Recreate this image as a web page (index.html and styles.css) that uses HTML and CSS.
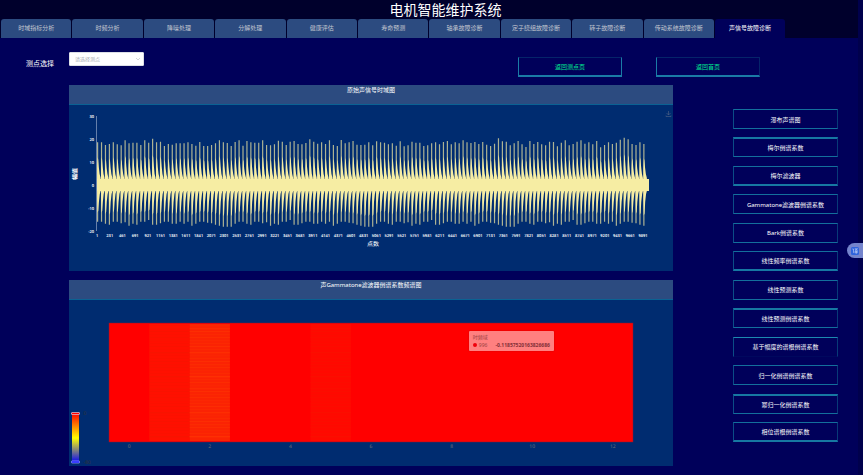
FILE: index.html
```
<!DOCTYPE html>
<html lang="zh-CN">
<head>
    <meta charset="UTF-8">
    <meta name="viewport" content="width=device-width, initial-scale=1.0">
    <title>电机智能维护系统</title>
    <link rel="stylesheet" href="styles.css">
</head>
<body>
    <header class="header">
        <h1>电机智能维护系统</h1>
        <nav class="tabs">
            <a href="#">时域指标分析</a>
            <a href="#">时频分析</a>
            <a href="#">降噪处理</a>
            <a href="#">分解处理</a>
            <a href="#">健康评估</a>
            <a href="#">寿命预测</a>
            <a href="#">轴承故障诊断</a>
            <a href="#">定子绕组故障诊断</a>
            <a href="#">转子故障诊断</a>
            <a href="#">传动系统故障诊断</a>
            <a href="#" class="active">声信号故障诊断</a>
        </nav>
    </header>

    <div class="toolbar">
        <label for="point">测点选择</label>
        <div class="select-box">
            <select id="point">
                <option>请选择测点</option>
            </select>
            <svg class="arrow" viewBox="0 0 6 4"><path d="M1 1l2 2 2-2" fill="none" stroke="#c0c4cc" stroke-width="0.7"/></svg>
        </div>
        <div class="back">
            <button type="button">返回测点页</button>
            <button type="button">返回首页</button>
        </div>
    </div>

    <main class="main">
        <div class="charts">
            <section class="panel">
                <h2>原始声信号时域图</h2>
                <svg id="wave" class="chart" viewBox="0 0 604 166"></svg>
            </section>
            <section class="panel">
                <h2>声Gammatone滤波器倒谱系数频谱图</h2>
                <svg id="heat" class="chart" viewBox="0 0 604 166">
                    <defs>
                        <linearGradient id="ramp" x1="0" y1="0" x2="0" y2="1">
                            <stop offset="0" stop-color="#ff0000"/>
                            <stop offset="0.5" stop-color="#ffff00"/>
                            <stop offset="1" stop-color="#0000ff"/>
                        </linearGradient>
                    </defs>
                </svg>
                <div class="tooltip">
                    <div>时频域</div>
                    <div class="tooltip-row"><i class="dot"></i><span>996</span><b>-0.11857520163826686</b></div>
                </div>
            </section>
        </div>

        <div class="methods">
            <button type="button">瀑布声谱图</button>
            <button type="button" class="top">梅尔倒谱系数</button>
            <button type="button" class="bottom">梅尔滤波器</button>
            <button type="button">Gammatone滤波器倒谱系数</button>
            <button type="button">Bark倒谱系数</button>
            <button type="button" class="bottom">线性频率倒谱系数</button>
            <button type="button">线性预测系数</button>
            <button type="button" class="top">线性预测倒谱系数</button>
            <button type="button" class="open">基于幅度的谱根倒谱系数</button>
            <button type="button">归一化倒谱倒谱系数</button>
            <button type="button" class="top">幂归一化倒谱系数</button>
            <button type="button" class="bottom">相位谱根倒谱系数</button>
        </div>
    </main>

    <button type="button" class="float-btn" aria-label="翻译">
        <svg viewBox="0 0 8 8">
            <rect x="0" y="0" width="8" height="8" rx="1.5" fill="#2f63dc"/>
            <path d="M1.3 2h1.2v3.6l.8-.6M3.7 1.8h2.8L4 3.8M4.3 2.3l2.4 1.5M3.8 4.5h2.9M3.6 5.6h3.2M5.2 3.7v3.2" fill="none" stroke="#c6d3f8" stroke-width="0.6"/>
        </svg>
    </button>

    <script src="charts.js"></script>
</body>
</html>
```

FILE: styles.css
```
* {
    box-sizing: border-box;
}
body {
    margin: 0;
    min-height: 100vh;
    background-color: #00005a;
    border-right: 5px solid #00004c;
    color: #fff;
    font-family: "Noto Sans", "Noto Sans CJK SC", sans-serif;
    font-size: 6px;
}
button, select {
    font-family: inherit;
    font-size: inherit;
}
.header {
    background-color: #00002c;
    margin-right: -5px;
}
h1 {
    margin: 0;
    padding-left: 28px;
    font-size: 14px;
    font-weight: 400;
    line-height: 19px;
    text-align: center;
}
.tabs {
    display: grid;
    grid-template-columns: repeat(11, 1fr);
    gap: 1px;
    width: 91%;
    padding-left: 1px;
}
.tabs a {
    height: 19px;
    line-height: 19px;
    border-radius: 3px 3px 0 0;
    background-color: #2c4b80;
    color: #c3c7d0;
    text-align: center;
    text-decoration: none;
    white-space: nowrap;
}
.tabs a.active {
    background-color: #00005a;
    color: #fff;
}

/* toolbar */
.toolbar {
    display: flex;
    align-items: flex-start;
    height: 47px;
    padding: 14px 98px 0 26px;
}
.toolbar label {
    width: 43px;
    padding-top: 7px;
    font-size: 7px;
    line-height: 9px;
}
.select-box {
    position: relative;
    width: 75px;
}
.select-box select {
    display: block;
    width: 100%;
    height: 14px;
    padding: 0 5px;
    border: 1px solid #dcdfe6;
    border-radius: 1px;
    background-color: #fff;
    color: #a8acb4;
    font-size: 5px;
    appearance: none;
}
.arrow {
    position: absolute;
    top: 5px;
    right: 3px;
    width: 6px;
    height: 4px;
}
.back {
    display: flex;
    gap: 34px;
    margin-left: auto;
    padding-top: 5px;
}
.back button {
    width: 104px;
    height: 20px;
    padding: 0;
    border: 1px solid #1a7ba6;
    border-top-color: #05246a;
    border-bottom-width: 2px;
    background-color: transparent;
    color: #00e890;
}
.back button:last-child {
    border-right-color: #05246a;
}

.main {
    display: grid;
    grid-template-columns: 1fr 105px;
    gap: 60px;
    padding: 0 20px 9px 69px;
}
.charts {
    display: grid;
    gap: 9px;
}
.panel {
    position: relative;
    background-color: #002c70;
}
h2 {
    height: 20px;
    margin: 0;
    padding-top: 1px;
    border-bottom: 1px solid #0b6293;
    background-color: #2c4b80;
    font-size: 6px;
    font-weight: 400;
    line-height: 8px;
    text-align: center;
}
.chart {
    display: block;
    width: 100%;
    text-rendering: geometricPrecision;
}
.tick {
    fill: #fff;
    font-size: 4px;
    font-weight: 600;
    text-anchor: middle;
}
.tick.end {
    text-anchor: end;
}
.tick.dim {
    fill: #6e7079;
    font-size: 5px;
    font-weight: 400;
}
.tick.dark {
    fill: #333;
    font-size: 5px;
    font-weight: 400;
}
.axis-name {
    fill: #fff;
    font-size: 6px;
    text-anchor: middle;
}
.axis-name.bold {
    font-weight: 700;
}
.tooltip {
    position: absolute;
    top: 51px;
    left: 66.2%;
    padding: 2px 4px;
    border-radius: 1px;
    background-color: rgba(255, 255, 255, 0.5);
    box-shadow: 0 0 2px rgba(0, 0, 0, 0.2);
    color: #a04040;
    font-size: 5px;
    line-height: 8px;
}
.tooltip-row {
    display: flex;
    align-items: center;
}
.tooltip-row b {
    margin-left: 8px;
    color: #842f38;
}
.dot {
    width: 4px;
    height: 4px;
    margin-right: 2px;
    border-radius: 50%;
    background-color: #f0000c;
}

/* right column */
.methods {
    display: flex;
    flex-direction: column;
    justify-content: space-between;
    padding: 24px 0;
}
.methods button {
    height: 20px;
    padding: 0;
    border: 1px solid #136f9c;
    border-left-color: #0b4d86;
    border-right-color: #083a78;
    background-color: transparent;
    color: #fff;
    white-space: nowrap;
}
.methods .top {
    border-top: 2px solid #1678a2;
}
.methods .bottom {
    border-bottom: 2px solid #1678a2;
}
.methods .open {
    border-top-color: #1c8ab0;
    border-bottom-color: #00085e;
}

.float-btn {
    position: fixed;
    top: 243px;
    right: 0;
    width: 16px;
    height: 15px;
    padding: 0 0 0 4px;
    border: 0;
    border-radius: 8px 0 0 8px;
    background-color: #7484cc;
}
.float-btn svg {
    display: block;
    width: 8px;
    height: 8px;
}
```

FILE: charts.js
```
const NS = 'http://www.w3.org/2000/svg';

function add(parent, tag, attrs, text) {
    const el = document.createElementNS(NS, tag);
    for (const key in attrs) {
        el.setAttribute(key, attrs[key]);
    }
    if (text !== undefined) {
        el.textContent = text;
    }
    parent.appendChild(el);
    return el;
}

// time domain signal: one impact every 71 samples
const peaks = [
    187, 187, 195, 192, 187, 193, 196, 181, 190, 188, 188, 195, 181, 188, 176, 187, 185, 198, 192, 194,
    190, 190, 190, 187, 192, 197, 186, 198, 198, 195, 190, 181, 187, 189, 198, 186, 181, 197, 183, 187,
    188, 188, 181, 195, 196, 193, 182, 185, 195, 185, 183, 192, 193, 189, 178, 185, 191, 187, 192, 181,
    195, 198, 180, 190, 187, 183, 194, 195, 194, 187, 196, 184, 187, 188, 193, 190, 197, 184, 199, 196,
    185, 188, 188, 198, 196, 190, 187, 193, 186, 183, 193, 187, 190, 181, 187, 189, 186, 192, 186, 194,
    198, 191, 175, 184, 185, 196, 190, 183, 193, 201, 183, 192, 186, 193, 196, 185, 186, 199, 188, 181,
    196, 192, 185, 181, 191, 187, 193, 183, 202, 195, 187, 192, 188, 179, 173, 178, 192, 195, 187, 192
].map(v => (315 - v) / 3);
const dips = [
    425, 425, 431, 434, 425, 425, 430, 427, 437, 431, 434, 425, 425, 420, 434, 434, 430, 425,
    425, 431, 431, 425, 431, 425, 437, 431, 425, 425, 428, 430, 434, 437, 440, 440, 440, 431
].map(v => (v - 315) / 3);

function drawWave() {
    const svg = document.getElementById('wave');
    const left = 28;
    const zero = 80;
    const width = 552;

    add(svg, 'path', { d: 'M27.5 11V126', stroke: '#8fa3c4', 'stroke-width': 0.7 });
    for (let v = -20; v <= 30; v += 10) {
        add(svg, 'text', { x: 25, y: zero - v * 2.3 + 2, class: 'tick end' }, v);
    }
    for (let n = 1; n < 10000; n += 230) {
        add(svg, 'text', { x: left + n / 10000 * width, y: 132, class: 'tick' }, n);
    }
    add(svg, 'text', { x: 304, y: 141, class: 'axis-name' }, '点数');
    add(svg, 'text', { x: 0, y: 0, class: 'axis-name bold', transform: 'translate(8 69) rotate(-90)' }, '幅值');

    let thin = '';
    let body = '';
    peaks.forEach((h, i) => {
        const x = left + 0.6 + i * 3.93;
        const d = dips[i % dips.length];
        thin += `M${x} ${zero - h}V${zero + d}`;
        body += `M${x - 0.5} ${zero}V${zero - h * 0.4}L${x} ${zero - h * 0.65}L${x + 0.6} ${zero - h * 0.6}L${x + 1.2} ${zero - h * 0.42}L${x + 2} ${zero - 11}L${x + 3} ${zero - 7}V${zero + 6}L${x + 2.2} ${zero + 9}L${x + 1.3} ${zero + 17}L${x + 0.7} ${zero + d * 0.7}L${x - 0.1} ${zero + d * 0.75}L${x - 0.5} ${zero + 14}Z`;
    });
    add(svg, 'path', { d: thin, stroke: '#f6eda3', 'stroke-width': 1.2, 'stroke-opacity': 0.7 });
    add(svg, 'path', { d: body, fill: '#f6eda3' });
    add(svg, 'rect', { x: left, y: zero - 6, width: width, height: 12, fill: '#f6eda3' });

    // save icon
    add(svg, 'path', {
        d: 'M599.5 6v4M597.5 8l2 2 2-2M597 10.5v1h5v-1',
        fill: 'none', stroke: '#526486', 'stroke-width': 0.6
    });
}

function drawHeat() {
    const svg = document.getElementById('heat');
    const cell = 524 / 13;
    const colors = { 1: '#ff1000', 2: '#fb2303', 5: '#ff0900' };
    const stripes = { 1: '#f41600', 2: '#ff3504', 5: '#f81200' };

    add(svg, 'rect', { x: 40, y: 23, width: 524, height: 119, fill: '#ff0000', stroke: '#7a1c38', 'stroke-width': 0.5 });
    for (const c in colors) {
        const x = 40 + c * cell;
        add(svg, 'rect', { x: x, y: 24, width: cell, height: 117, fill: colors[c] });
        for (let i = 0; i < 38; i++) {
            add(svg, 'rect', {
                x: x, y: 25 + i * 3, width: cell, height: i % 4 === 1 ? 1.4 : 0.8,
                fill: stripes[c], 'fill-opacity': 0.25 + (i * 7 % 5) * 0.12
            });
        }
    }
    for (let n = 0; n <= 12; n += 2) {
        add(svg, 'text', { x: 40 + (n + 0.5) * cell, y: 148, class: 'tick dim' }, n);
    }

    // visual map
    add(svg, 'rect', { x: 3, y: 113, width: 7, height: 50, fill: 'url(#ramp)' });
    add(svg, 'rect', { x: 2.5, y: 112.5, width: 8, height: 2, rx: 0.5, fill: '#ff0000', stroke: '#e6c8d8', 'stroke-width': 0.7 });
    add(svg, 'rect', { x: 2.5, y: 161, width: 8, height: 2, rx: 0.5, fill: '#0000ff', stroke: '#a6b0ff', 'stroke-width': 0.7 });
    add(svg, 'text', { x: 16, y: 115, class: 'tick dark' }, '0');
    add(svg, 'text', { x: 18, y: 164, class: 'tick dark' }, '-80');
}

drawWave();
drawHeat();
```
